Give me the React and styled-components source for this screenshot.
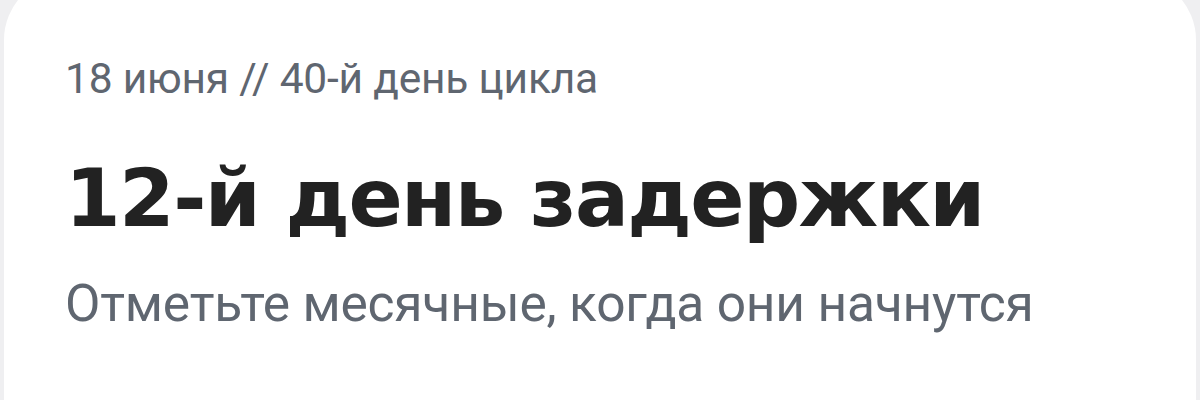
import React from "react";
import styled, { createGlobalStyle } from "styled-components";

const Global = createGlobalStyle`
  html, body {
    margin: 0;
    padding: 0;
    background: #efeff1;
    overflow: hidden;
  }
  * { box-sizing: border-box; }
`;

const Page = styled.div`
  width: 1200px;
  height: 400px;
  padding: 0 4px;
  overflow: hidden;
`;

const Card = styled.section`
  margin-top: -24px;
  height: 460px;
  background: #ffffff;
  border-radius: 64px 64px 0 0;
  padding: 79px 0 0 61px;
  display: flex;
  flex-direction: column;
  align-items: flex-start;
`;

const Meta = styled.div`
  font-family: Roboto, "Liberation Sans", sans-serif;
  font-size: 42.5px;
  line-height: 48px;
  color: #5f6670;
  letter-spacing: -0.2px;
`;

const Title = styled.h1`
  margin: 48px 0 0;
  font-family: "DejaVu Sans", "Liberation Sans", sans-serif;
  font-weight: 700;
  font-size: 80px;
  line-height: 96px;
  color: #222222;
  letter-spacing: -1.6px;
`;

const Hint = styled.p`
  margin: 27px 0 0;
  font-family: Roboto, "Liberation Sans", sans-serif;
  font-size: 51.5px;
  line-height: 60px;
  color: #5f6670;
  letter-spacing: -0.2px;
`;

export default function App() {
  return (
    <>
      <Global />
      <Page>
        <Card>
          <Meta>18 июня // 40-й день цикла</Meta>
          <Title>12-й день задержки</Title>
          <Hint>Отметьте месячные, когда они начнутся</Hint>
        </Card>
      </Page>
    </>
  );
}
